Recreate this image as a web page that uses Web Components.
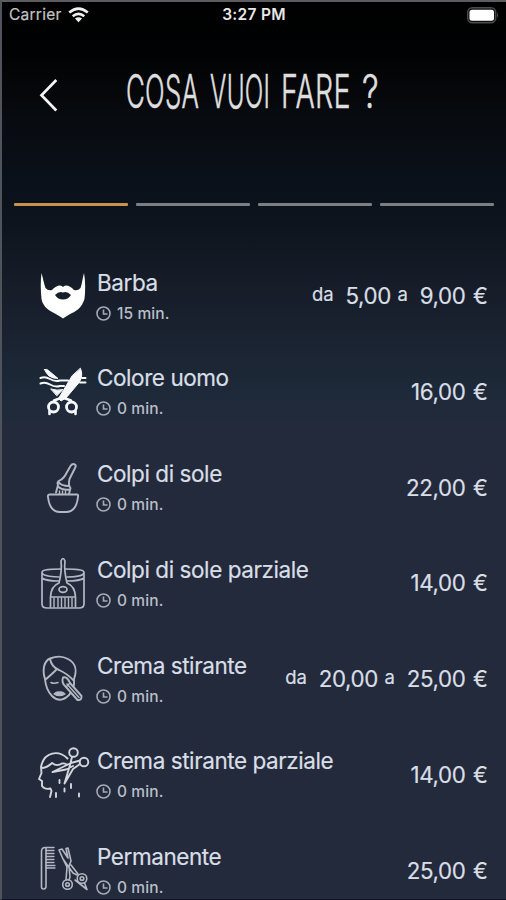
<!DOCTYPE html>
<html lang="it">
<head>
<meta charset="utf-8">
<title>Cosa vuoi fare ?</title>
<style>
html,body{margin:0;height:100%;background:#232a3b}
body{overflow:hidden;font-family:Inter,"Liberation Sans",sans-serif}
</style>
</head>
<body>
<booking-screen>
  <status-bar slot="status" carrier="Carrier" time="3:27 PM"></status-bar>
  <screen-header slot="header"></screen-header>
  <step-progress slot="steps" total="4" current="1"></step-progress>
  <service-row icon="beard" minutes="15" from="5,00" price="9,00">Barba</service-row>
  <service-row icon="color" minutes="0" price="16,00">Colore uomo</service-row>
  <service-row icon="bowl" minutes="0" price="22,00">Colpi di sole</service-row>
  <service-row icon="jar" minutes="0" price="14,00">Colpi di sole parziale</service-row>
  <service-row icon="face" minutes="0" from="20,00" price="25,00">Crema stirante</service-row>
  <service-row icon="cut" minutes="0" price="14,00">Crema stirante parziale</service-row>
  <service-row icon="comb" minutes="0" price="25,00">Permanente</service-row>
</booking-screen>
<script>
const define = (name, render, ready) => customElements.define(name, class extends HTMLElement {
  connectedCallback() {
    if (this.shadowRoot) return;
    this.attachShadow({mode: 'open'}).innerHTML = render(this);
    if (ready) ready(this.shadowRoot);
  }
});

// Every service icon is drawn on a 70x70 grid.
const icons = {
  beard: `<path fill="#fff" stroke="none" d="M11.500 13C13 18 14 24 15.500 28Q18 31 22 30Q26 25.500 30 25.500Q32 25.500 33 27Q34 25.500 36 25.500Q40 25.500 44 30Q48 31 50.500 28C52 24 52.500 18 54 13C55.500 21 55.500 31 54.500 39C52 47 47 51 42 53C38 55 35.500 57 33 58.500C30 56.500 27 54.500 23 52.500C17 49.500 12.500 45 11.500 39C10.500 30 10.500 21 11.500 13Z"/><path fill="#151f2b" stroke="none" d="M25 35Q29 31 33 32.500Q37 31 41 35Q38 39.500 33 39.500Q28 39.500 25 35Z"/>`,
  color: `<g stroke="#f6f8fa" stroke-width="2"><path d="M10.500 23Q15 21 20 24T30 25.500H38M10.500 28.500Q15 26.500 20 29.500T30 31H34M50 27.500H55.500M52 23H55.500"/><path stroke-width="1" fill="#f6f8fa" d="M14.500 14.500Q17 13.500 19 16L28 23.500Q23 23.500 19 21Q16 18 14.500 14.500ZM21 34Q27 36 33 34.500L27 40.500Z"/><path stroke-width="1" fill="#f6f8fa" d="M50.500 13.500Q53.500 20 49.500 27L36 43L31 46L28.500 43.500L42 21Z"/><circle cx="23.500" cy="52" r="5" stroke-width="2.800"/><circle cx="41.500" cy="52" r="5" stroke-width="2.800"/><path stroke-width="2.600" d="M24 45.500L31 43M41 45.500L34 43M19.500 56V59M45.500 56V59"/></g>`,
  bowl: `<g stroke-width="1.900"><path d="M20 43.500H47Q48.500 43.500 48 46C47 55 43 61 36 61H30C23 61 19 55 18 46Q17.500 43.500 20 43.500Z"/><path d="M26 41.500L28 34Q26.500 31 29.500 29.500Q34 27.500 36.500 22L40.500 15Q42.500 12 45 13.500Q46.500 15 45 17L39.500 28Q38 34 40.500 37L39 43M28.500 31Q31 35 39 35M28 35.500Q32 39.500 40 38.500"/><path stroke-width="1.400" d="M29.500 40V43M32.500 40V43M35.500 40V43"/></g>`,
  jar: `<g stroke-width="1.700"><path d="M31 22C15 22 12 23.500 12 25.500C12 29.500 26 30 29 30M37 30C44 30 54 29 54 25.500C54 23.500 51 22 35 22M12 25V57Q12 61 17 61H49Q54 61 54 57V25M12 31Q16 34 29 34M37 34Q50 34 54 31"/><path d="M31 14Q33 9 35 14C34 22 35 28 37 36Q45 39 45.500 50H20.500Q21 39 29 36C31 28 32 22 31 14ZM20.500 50V60M45.500 50V60"/><path stroke-width="1.400" d="M24 51V60M28 51V60M31.500 51V60M35 51V60M38.500 51V60M42 51V60"/><ellipse cx="33" cy="42.500" rx="4" ry="2.800"/></g>`,
  face: `<g stroke-width="1.900"><path d="M15 36C12 27 14 18 20 15.500Q30 11.500 38 16C46 20 47 28 44 36Q45 46 39 52Q30 61 22 53Q16 47 15 36ZM20 15.500C21 22 24 25 29 27Q38 31 44 38M15 37Q22 31 26 27"/><path stroke-width="1.600" d="M21 39.500Q24 41 28 39.500"/><path fill="#b3b8c3" stroke-width="1.200" d="M24 51Q27 48 29.500 49Q32 48 35 51Q29.500 54.500 24 51Z"/><path fill="#232a3b" d="M33 34.500Q37 33 40 40L51.500 53Q52 57.500 47.500 57L36 44Q31 40 33 34.500Z"/><path stroke-width="1.500" d="M37 41L49 54.500M36 44L40 40"/></g>`,
  cut: `<g stroke="#d4d7dd" stroke-width="1.900"><circle cx="43.500" cy="14.500" r="4.300"/><circle cx="54" cy="24" r="4.300"/><path d="M42 19L40 27L34.500 45.500L43 31L50 26M50 22.500L41 25L22.500 34L36 31.500L43 28"/><path d="M11 30Q17 30 22 25Q27 29 32 25.500Q34 25 37 26.500M37.500 20.500C29 12 14 13 11 29L11.500 35L9 41L12 43V48Q15 52 20.500 50.500L21.500 53L20 59M26 55V59M29.500 42V45M34.500 50.500V53.500M41 46V50M49 55.500V58.500"/></g>`,
  comb: `<g stroke-width="1.600"><path d="M11.500 53V17Q12 13.500 15 13.500H24M16 14V53Q15.500 55 13.700 55Q11.500 55 11.500 53"/><path stroke-width="1.300" d="M16 16.500H24M16 19.500H24M16 22.500H24M16 25.500H24M16 28.500H24M16 31.500H25M16 34H25"/><path d="M29 16L33 25L38 32L43 39L47 41M29 16L32 15L38 24L36 14.500L38 14L41 27L39 32L40 43L39 46M34 27L37 33L36 46M41 31L48 40M54.500 49L57 55.500L45 46"/><circle cx="37.500" cy="50.500" r="4.800"/><circle cx="37.500" cy="50.500" r="1.800"/><circle cx="52" cy="44.500" r="4.800"/><circle cx="52" cy="44.500" r="1.800"/></g>`
};

define('booking-screen', () => `
<style>
:host{display:flex;flex-direction:column;box-sizing:border-box;height:900px;width:506px;overflow:hidden;
 border-top:2px solid #5c5d60;border-left:2px solid #4f535b;border-bottom:1px solid #171129;
 background:linear-gradient(#000 0,#010203 50px,#080b10 120px,#0a101a 175px,#0e141d 220px,#151b26 270px,#1a2230 330px,#1d2938 385px,#222a3c 425px,#232a3b 470px)}
::slotted(*){flex:none}
.list{flex:none;margin-top:41px;display:flex;flex-direction:column}
</style>
<slot name="status"></slot><slot name="header"></slot><slot name="steps"></slot>
<div class="list"><slot></slot></div>`);

define('status-bar', el => `
<style>
:host{display:grid;grid-template-columns:1fr auto 1fr;align-items:center;height:26px;padding:0 7px;color:#e8e8e8;font-size:15.500px;line-height:26px}
.left{display:flex;align-items:center;gap:6px;color:#c4c4c4}
.left span{letter-spacing:.25px;-webkit-text-stroke:.2px}
.time{font-weight:600;font-size:15.500px;letter-spacing:.3px}
.battery{justify-self:end}
svg{display:block}
</style>
<div class="left"><span>${el.getAttribute('carrier')}</span>
<svg width="21" height="16" viewBox="0 0 21 16" fill="none" stroke="#f0f0f0" stroke-width="2.600"><path d="M1.200 5.600Q10.500-2.500 19.800 5.600M4.700 9.300Q10.500 4.500 16.300 9.300"/><path stroke="none" fill="#f0f0f0" d="M7 11.500Q10.500 8.800 14 11.500L10.500 15.200Z"/></svg></div>
<span class="time">${el.getAttribute('time')}</span>
<svg class="battery" width="32" height="17" viewBox="0 0 32 17"><rect x=".7" y=".7" width="28" height="15" rx="4.500" fill="#111" stroke="#4a4a4a" stroke-width="1.400"/><rect x="2.500" y="2.700" width="24.500" height="11" rx="2.500" fill="#fff"/><path fill="#4a4a4a" d="M30 5.500Q32 8.200 30 11Z"/></svg>`);

// Each title word is condensed horizontally to the width of its box.
define('screen-header', () => `
<style>
:host{display:flex;height:173.500px;align-items:flex-start;color:#dedede}
.back{display:block;margin:50px 0 0 36px}
.title{display:flex;gap:11px;margin:33px 0 0 66px;height:60px}
b{display:block;flex:none}
span{display:inline-block;white-space:nowrap;transform-origin:0 0;font-size:47px;line-height:60px;font-weight:300;-webkit-text-stroke:.6px #dedede;letter-spacing:.5px}
</style>
<svg class="back" width="22" height="36" viewBox="0 0 22 36" fill="none" stroke="#f4f4f4" stroke-width="2.700"><path d="M18.300 2L3.500 17.200L18.300 32.500"/></svg>
<div class="title"><b style="width:73px"><span>COSA</span></b><b style="width:60px"><span>VUOI</span></b><b style="width:70px"><span>FARE</span></b><b style="width:17px"><span>?</span></b></div>`, root => {
  for (const box of root.querySelectorAll('b')) {
    const s = box.firstChild;
    s.style.transform = `scaleX(${box.offsetWidth / s.offsetWidth})`;
  }
});

define('step-progress', el => {
  const n = +el.getAttribute('total'), c = +el.getAttribute('current');
  return `
<style>
:host{display:flex;gap:7.700px;height:4px;margin:1px 12px 0 12px}
i{flex:1;height:3px;margin-top:.5px;border-radius:1px;background:#7b7e82}
i.on{background:#c8924c}
</style>${Array.from({length: n}, (_, i) => `<i class="${i < c ? 'on' : ''}"></i>`).join('')}`;
});

define('service-row', el => {
  const from = el.getAttribute('from');
  return `
<style>
:host{display:flex;height:95.800px;flex:none;color:#d9dee6}
.icon{flex:none;width:70px;height:70px;margin:12px 0 0 28px;fill:none;stroke:#b3b8c3;stroke-linecap:round;stroke-linejoin:round}
.info{flex:1;margin:21px 0 0 -3px;white-space:nowrap}
.name{font-size:22.500px;line-height:28px;letter-spacing:-.43px;-webkit-text-stroke:.2px}
.time{display:flex;align-items:center;gap:6px;margin-top:7px;font-size:15.500px;line-height:20px;color:#b9bec8;letter-spacing:.1px;font-weight:500}
.time svg{margin:-1px 0 0 -1px}
.price{display:flex;align-items:center;height:30px;margin:33px 20px 0 0;font-size:22.300px;white-space:pre;letter-spacing:-.35px;-webkit-text-stroke:.2px}
small{font-size:18.500px;margin-top:-4px;letter-spacing:-.2px}
.da{margin-right:12px}.a{margin:-4px 12px 0 6.500px}
.eur{margin-left:7.500px;width:13px;display:inline-block}
</style>
<svg class="icon" viewBox="0 0 70 70">${icons[el.getAttribute('icon')]}</svg>
<div class="info"><div class="name"><slot></slot></div>
<div class="time"><svg width="15" height="15" viewBox="0 0 15 15" fill="none" stroke="#a4aab5" stroke-width="1.600"><circle cx="7.500" cy="7.500" r="6.500"/><path d="M7.500 3.500V8H11.500"/></svg><span>${el.getAttribute('minutes')} min.</span></div></div>
<div class="price">${from ? `<small class="da">da</small><span>${from}</span><small class="a">a</small>` : ''}<span>${el.getAttribute('price')}</span><span class="eur">€</span></div>`;
});
</script>
</body>
</html>
